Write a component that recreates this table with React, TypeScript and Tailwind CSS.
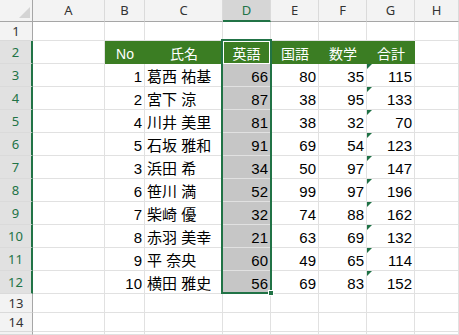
import React from 'react'

const cols = ['A', 'B', 'C', 'D', 'E', 'F', 'G', 'H']
const heads = ['No', '氏名', '英語', '国語', '数学', '合計']

const rows: [number, string, number, number, number, number][] = [
  [1, '葛西 祐基', 66, 80, 35, 115],
  [2, '宮下 涼', 87, 38, 95, 133],
  [4, '川井 美里', 81, 38, 32, 70],
  [5, '石坂 雅和', 91, 69, 54, 123],
  [3, '浜田 希', 34, 50, 97, 147],
  [6, '笹川 満', 52, 99, 97, 196],
  [7, '柴崎 優', 32, 74, 88, 162],
  [8, '赤羽 美幸', 21, 63, 69, 132],
  [9, '平 奈央', 60, 49, 65, 114],
  [10, '横田 雅史', 56, 69, 83, 152],
]

const font = { fontFamily: '"Liberation Sans", "Noto Sans CJK JP", sans-serif' }

function Cell({ children, className = '' }: { children?: React.ReactNode; className?: string }) {
  return (
    <div className={`relative flex items-end border-r border-b border-[#e1e1e1] px-[2px] pb-[2px] text-[15px] leading-none text-black ${className}`}>
      {children}
    </div>
  )
}

function RowHead({ n, sel }: { n?: number; sel?: boolean }) {
  return (
    <div
      className={`flex items-center justify-center border-b border-[#dadada] text-[13px] leading-none ${
        sel ? 'bg-[#e1e1e1] text-[#217346] border-r-2 border-r-[#217346]' : 'bg-[#f3f3f3] text-[#333] border-r border-r-[#a6a6a6]'
      }`}
      style={{ fontFamily: '"Noto Sans", sans-serif' }}
    >
      {n}
    </div>
  )
}

function Triangle() {
  return (
    <svg className="absolute left-0 top-0" width="5" height="5" viewBox="0 0 5 5">
      <polygon points="0,0 5,0 0,5" fill="#1e7145" />
    </svg>
  )
}

export default function App() {
  return (
    <div className="relative w-[459px] h-[335px] overflow-hidden bg-white" style={font}>
      <div className="grid grid-cols-[33px_72px_40px_78px_48px_48px_48px_48px_1fr] grid-rows-[22px_19px_repeat(11,23px)_19px_19px_1fr] h-full">
        {/* column headers */}
        <div className="relative bg-[#f3f3f3] border-r border-b border-[#a6a6a6]">
          <svg className="absolute left-[19px] top-[7px]" width="11" height="11" viewBox="0 0 11 11">
            <polygon points="11,0 11,11 0,11" fill="#d4d4d4" />
          </svg>
        </div>
        {cols.map((c) => (
          <div
            key={c}
            className={`flex items-center justify-center text-[13px] leading-none border-r border-r-[#dadada] ${
              c === 'D'
                ? 'bg-[#d6d6d6] text-[#217346] border-b-2 border-b-[#217346]'
                : 'bg-[#f3f3f3] text-[#333] border-b border-b-[#a6a6a6]'
            }`}
            style={{ fontFamily: '"Noto Sans", sans-serif' }}
          >
            {c}
          </div>
        ))}

        {/* row 1 */}
        <RowHead n={1} />
        {cols.map((c) => (
          <Cell key={c} />
        ))}

        {/* row 2 - table header */}
        <RowHead n={2} sel />
        <Cell />
        {heads.map((h) => (
          <div
            key={h}
            className={`flex items-end justify-center bg-[#3b7d23] pb-[3px] text-[14px] leading-none text-white ${
              h === '英語' ? 'shadow-[inset_0_0_0_1px_#ffffff] border-r border-[#3b7d23]' : ''
            }`}
          >
            {h}
          </div>
        ))}
        <Cell />

        {rows.map((r, i) => (
          <React.Fragment key={i}>
            <RowHead n={i + 3} sel />
            <Cell />
            <Cell className="justify-end">{r[0]}</Cell>
            <Cell>{r[1]}</Cell>
            <Cell className="justify-end bg-[#c6c6c6] border-[#d9d9d9]">{r[2]}</Cell>
            <Cell className="justify-end">{r[3]}</Cell>
            <Cell className="justify-end">{r[4]}</Cell>
            <Cell className="justify-end">
              <Triangle />
              {r[5]}
            </Cell>
            <Cell />
          </React.Fragment>
        ))}

        {[13, 14, 0].map((n) => (
          <React.Fragment key={n}>
            <RowHead n={n || undefined} />
            {cols.map((c) => (
              <Cell key={c} />
            ))}
          </React.Fragment>
        ))}
      </div>

      {/* selection D2:D12 */}
      <div className="pointer-events-none absolute left-[221px] top-[39px] w-[51px] h-[255px] border-2 border-[#217346]">
        <div className="absolute -right-[4px] -bottom-[4px] w-[6px] h-[6px] bg-[#217346] border border-white" />
      </div>
    </div>
  )
}
